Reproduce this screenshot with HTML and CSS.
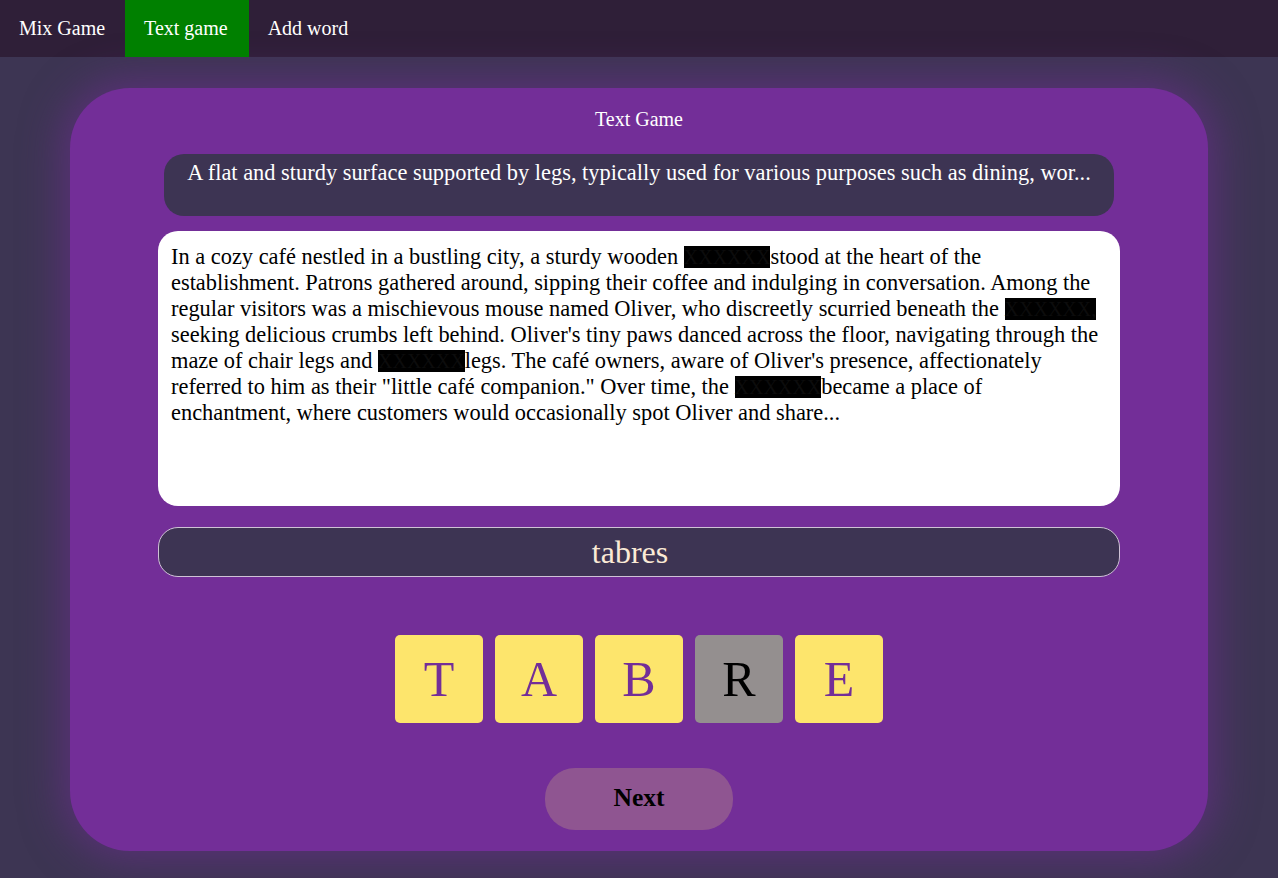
FILE: index.html
```html
<!DOCTYPE html>
<html>
<head>
<meta charset="utf-8">
<link rel="stylesheet" href="styles.css">
</head>
<body>
<nav class="nav">
  <a class="nav-item">Mix Game</a>
  <a class="nav-item active">Text game</a>
  <a class="nav-item">Add word</a>
</nav>
<main class="page">
  <section class="card">
    <h1 class="title">Text Game</h1>
    <div class="definition">A flat and sturdy surface supported by legs, typically used for various purposes such as dining, wor...</div>
    <div class="story">In a cozy café nestled in a bustling city, a sturdy wooden <span class="redact">XXXXXX</span>stood at the heart of the establishment. Patrons gathered around, sipping their coffee and indulging in conversation. Among the regular visitors was a mischievous mouse named Oliver, who discreetly scurried beneath the <span class="redact">XXXXXX,</span> seeking delicious crumbs left behind. Oliver's tiny paws danced across the floor, navigating through the maze of chair legs and <span class="redact">XXXXXX</span>legs. The café owners, aware of Oliver's presence, affectionately referred to him as their "little café companion." Over time, the <span class="redact">XXXXXX</span>became a place of enchantment, where customers would occasionally spot Oliver and share...</div>
    <div class="answer">tabres</div>
    <div class="tiles">
      <div class="tile">T</div>
      <div class="tile">A</div>
      <div class="tile">B</div>
      <div class="tile used">R</div>
      <div class="tile">E</div>
    </div>
    <button class="next">Next</button>
  </section>
</main>
</body>
</html>
```

FILE: styles.css
```css
html, body {
  margin: 0;
  padding: 0;
}
body {
  background: #3d3553;
  font-family: "Liberation Serif", "Times New Roman", serif;
  height: 878px;
  overflow: hidden;
}
.nav {
  display: flex;
  height: 57px;
  background: #2f1f38;
}
.nav-item {
  display: flex;
  align-items: center;
  padding: 0 20px 1px 19px;
  color: #ffffff;
  font-size: 20px;
}
.nav-item.active {
  background: #008000;
  padding-right: 21px;
}
.page {
  padding: 31px 70px 0 70px;
}
.card {
  height: 763px;
  box-sizing: border-box;
  background: #732e98;
  border-radius: 60px;
  box-shadow: 0 0 40px 8px rgba(115, 46, 152, 0.55);
  padding: 20px 88px 0 88px;
  display: flex;
  flex-direction: column;
  align-items: center;
}
.title {
  margin: 0;
  font-size: 20px;
  font-weight: normal;
  color: #ffffff;
  line-height: 22px;
}
.definition {
  margin-top: 24px;
  width: 950px;
  height: 62px;
  box-sizing: border-box;
  background: #3d3453;
  border-radius: 20px;
  color: #ffffff;
  font-size: 22.4px;
  text-align: center;
  padding-top: 6px;
  white-space: nowrap;
}
.story {
  margin-top: 15px;
  width: 962px;
  height: 275px;
  box-sizing: border-box;
  background: #ffffff;
  border-radius: 20px;
  padding: 13px 13px 11px 13px;
  font-size: 22.4px;
  line-height: 26px;
  color: #000000;
}
.redact {
  background: #000000;
  color: #0c0c0c;
  font-size: 20px;
}
.answer {
  margin-top: 21px;
  width: 962px;
  height: 50px;
  box-sizing: border-box;
  background: #3d3453;
  border: 1px solid #cfc2d6;
  border-radius: 20px;
  color: #fbead6;
  font-size: 32px;
  text-align: center;
  line-height: 48px;
  padding-right: 18px;
}
.tiles {
  margin-top: 58px;
  display: flex;
  gap: 12px;
}
.tile {
  width: 88px;
  height: 88px;
  background: #fde56c;
  border-radius: 5px;
  color: #732e98;
  font-size: 50px;
  display: flex;
  align-items: center;
  justify-content: center;
}
.tile.used {
  background: #948f8f;
  color: #000000;
}
.next {
  margin-top: 45px;
  width: 188px;
  height: 62px;
  border: none;
  border-radius: 30px;
  background: #8f5591;
  font-family: "Liberation Serif", "Times New Roman", serif;
  font-weight: bold;
  font-size: 25.6px;
  color: #000000;
  padding: 0 0 3px 0;
}
```
